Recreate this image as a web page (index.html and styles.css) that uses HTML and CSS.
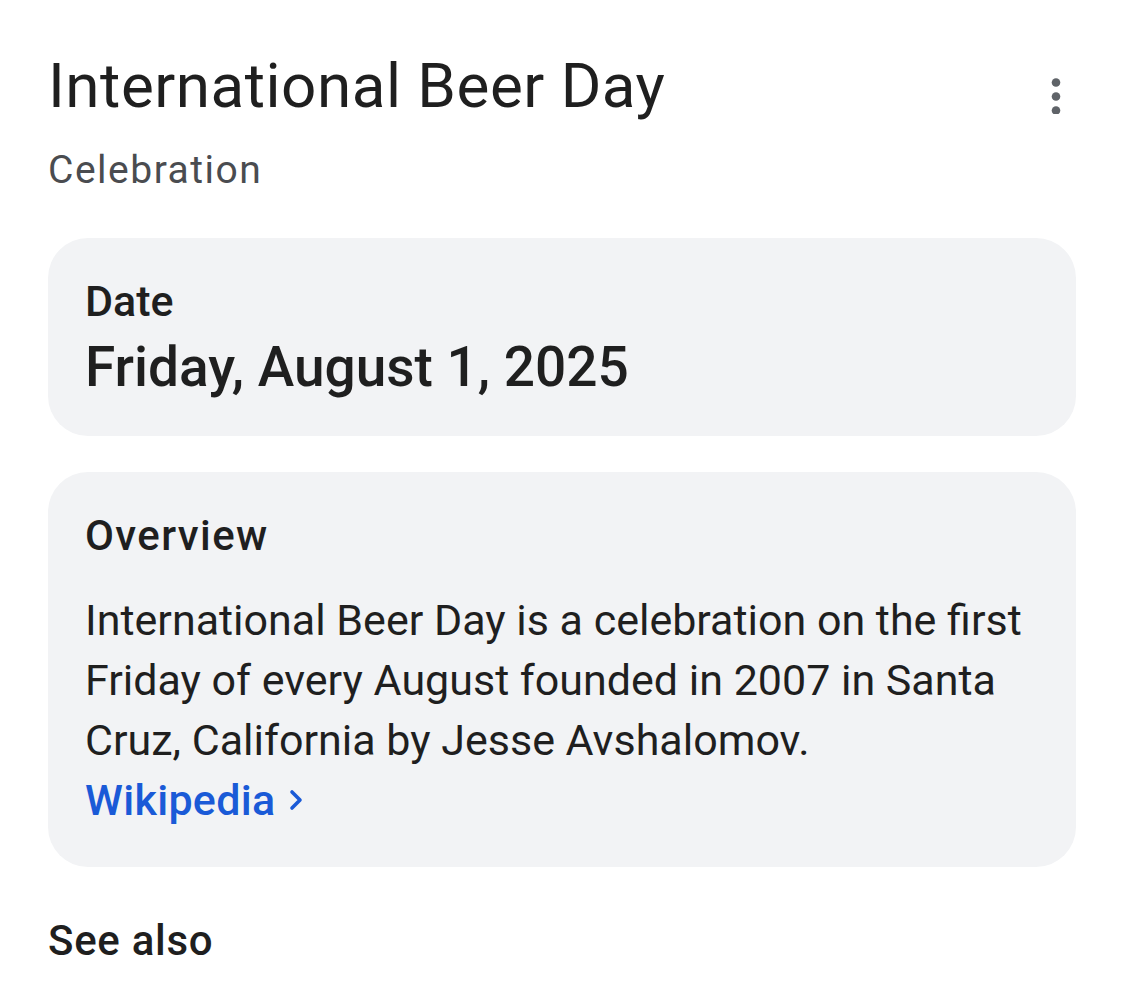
FILE: index.html
```html
<!DOCTYPE html>
<html lang="en">
<head>
    <meta charset="UTF-8">
    <meta name="viewport" content="width=device-width, initial-scale=1.0">
    <title>International Beer Day</title>
    <link rel="stylesheet" href="styles.css">
</head>
<body>
    <div class="panel">
        <div class="header">
            <div class="heading">
                <h1 class="title">International Beer Day</h1>
                <div class="subtitle">Celebration</div>
            </div>
            <button class="more" aria-label="More options">
                <svg width="12" height="36" viewBox="0 0 12 36">
                    <circle cx="6" cy="4.5" r="4.3" fill="#5f6368"/>
                    <circle cx="6" cy="18.5" r="4.3" fill="#5f6368"/>
                    <circle cx="6" cy="32.5" r="4.3" fill="#5f6368"/>
                </svg>
            </button>
        </div>

        <div class="card date-card">
            <div class="label">Date</div>
            <div class="date-value">Friday, August 1, 2025</div>
        </div>

        <div class="card overview-card">
            <div class="overview-label">Overview</div>
            <p class="overview-text">International Beer Day is a celebration on the first Friday of every August founded in 2007 in Santa Cruz, California by Jesse Avshalomov.</p>
            <a class="source" href="#">Wikipedia
                <svg width="18" height="24" viewBox="0 0 18 24">
                    <path d="M5 4 L13 12 L5 20" fill="none" stroke="#1a5ad7" stroke-width="3.6" stroke-linecap="round" stroke-linejoin="round"/>
                </svg>
            </a>
        </div>

        <h2 class="see-also">See also</h2>
    </div>
</body>
</html>
```

FILE: styles.css
```css
body {
    margin: 0;
    background: #ffffff;
    font-family: Roboto, 'Noto Sans', sans-serif;
    color: #1f1f1f;
}

.panel {
    padding: 46px 48px 0 48px;
}

.header {
    display: flex;
    justify-content: space-between;
    align-items: flex-start;
}

.title {
    margin: 0;
    font-size: 62px;
    line-height: 80px;
    font-weight: 400;
    letter-spacing: 0.5px;
    color: #1f1f1f;
}

.subtitle {
    margin-top: 19px;
    font-size: 39px;
    line-height: 50px;
    letter-spacing: 1.5px;
    color: #4a4c50;
}

.more {
    margin: 32px 14px 0 0;
    padding: 0;
    border: none;
    background: none;
    cursor: pointer;
    line-height: 0;
}

.card {
    background: #f2f3f5;
    border-radius: 40px;
    padding: 0 37px;
}

.date-card {
    margin-top: 43px;
    padding-top: 35px;
    padding-bottom: 34px;
}

.label {
    font-size: 43px;
    line-height: 56px;
    font-weight: 500;
}

.date-value {
    margin-top: 3px;
    font-size: 55px;
    line-height: 70px;
    font-weight: 500;
}

.overview-card {
    margin-top: 36px;
    padding-top: 38px;
    padding-bottom: 37px;
}

.overview-label {
    font-size: 42px;
    line-height: 52px;
    font-weight: 500;
    letter-spacing: 1.4px;
}

.overview-text {
    margin: 28px 0 0 0;
    font-size: 43px;
    line-height: 60px;
}

.source {
    display: flex;
    align-items: center;
    gap: 12px;
    font-size: 43px;
    line-height: 60px;
    font-weight: 500;
    letter-spacing: 0.3px;
    color: #1a5ad7;
    text-decoration: none;
}

.see-also {
    margin: 47px 0 0 0;
    font-size: 42px;
    line-height: 54px;
    font-weight: 500;
    letter-spacing: 0.7px;
}
```
